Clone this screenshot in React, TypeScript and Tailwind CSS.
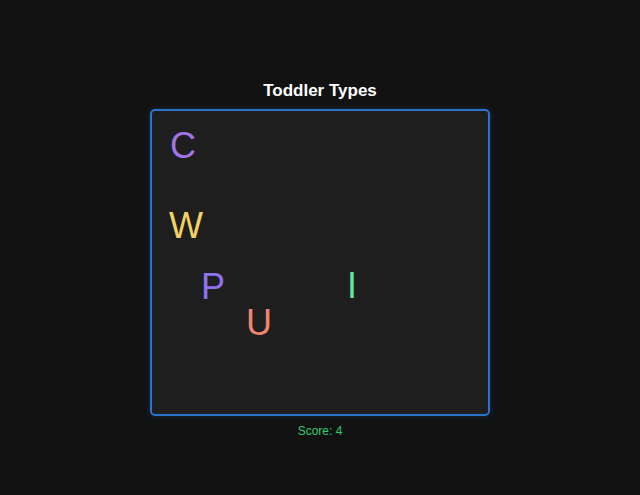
const letters = [
  { ch: "C", left: 18, top: 17, color: "text-[#a374e6]" },
  { ch: "W", left: 17, top: 97, color: "text-[#f2d265]" },
  { ch: "P", left: 49, top: 158, color: "text-[#8f72ee]" },
  { ch: "U", left: 94, top: 194, color: "text-[#ee8670]" },
  { ch: "I", left: 195, top: 157, color: "text-[#62e39a]" },
];

export default function App() {
  return (
    <div className="min-h-screen w-full bg-[#121212] font-['Liberation_Sans',Arial,sans-serif] flex flex-col items-center pt-[81px]">
      <h1 className="text-[17px] leading-[20px] font-bold text-white">Toddler Types</h1>
      <div className="relative mt-[8px] w-[340px] h-[307px] rounded-[5px] border-2 border-[#2b74cc] bg-[#1e1e1e] shadow-[0_0_6px_rgba(43,116,204,0.25)]">
        {letters.map((l) => (
          <span
            key={l.ch}
            className={`absolute text-[36px] leading-none ${l.color}`}
            style={{ left: l.left, top: l.top }}
          >
            {l.ch}
          </span>
        ))}
      </div>
      <p className="mt-[7px] text-[12px] leading-[16px] text-[#2ecc6a]">Score: 4</p>
    </div>
  );
}
